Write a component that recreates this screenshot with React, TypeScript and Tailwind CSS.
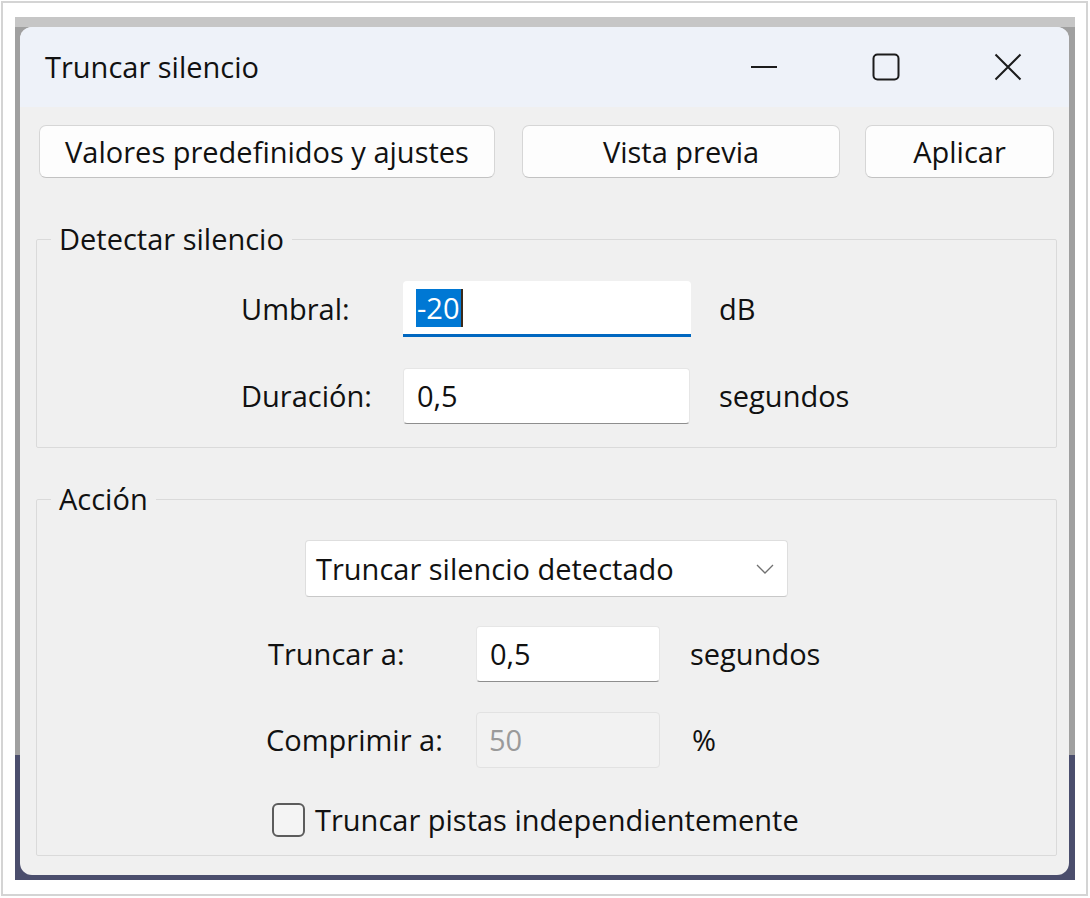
import React from 'react';

function CaptionButtons() {
  return (
    <div className="flex h-full">
      <div className="w-[122px] flex items-center justify-center">
        <svg width="28" height="4" viewBox="0 0 28 4">
          <line x1="1" y1="2" x2="27" y2="2" stroke="#1c1c1c" strokeWidth="2" />
        </svg>
      </div>
      <div className="w-[122px] flex items-center justify-center">
        <svg width="28" height="28" viewBox="0 0 28 28">
          <rect x="1.5" y="1.5" width="25" height="25" rx="4" fill="none" stroke="#1c1c1c" strokeWidth="2" />
        </svg>
      </div>
      <div className="w-[122px] flex items-center justify-center">
        <svg width="28" height="28" viewBox="0 0 28 28">
          <path d="M1.5 1.5 L26.5 26.5 M26.5 1.5 L1.5 26.5" stroke="#1c1c1c" strokeWidth="2" fill="none" />
        </svg>
      </div>
    </div>
  );
}

function PushButton({ label, width }: { label: string; width: string }) {
  return (
    <button
      className={`${width} h-[53px] bg-[#fdfdfd] border border-[#d6d6d6] border-b-[#c2c2c2] rounded-[7px] text-[29px] text-[#111] leading-none flex items-center justify-center`}
    >
      {label}
    </button>
  );
}

function TextBox({ value, width }: { value: string; width: string }) {
  return (
    <div
      className={`${width} h-[56px] bg-white border border-[#e6e6e6] border-b-[#8e8e8e] rounded-[4px] flex items-center pl-[13px] text-[29px] text-[#111]`}
    >
      {value}
    </div>
  );
}

function Group({ title, children }: { title: string; children: React.ReactNode }) {
  return (
    <fieldset className="ml-[16px] mr-[12px] border border-[#dadada] rounded-[2px]">
      <legend className="ml-[14px] px-[8px] text-[29px] leading-[38px] text-[#111]">{title}</legend>
      {children}
    </fieldset>
  );
}

export default function App() {
  return (
    <div className="w-[1090px] h-[898px] bg-white pt-[1px] pl-[1px] pr-[2px] pb-[2px] font-['Open_Sans',sans-serif]">
      <div className="h-full border-2 border-[#d4d4d4] pt-[14px] pl-[12px] pr-[11px] pb-[14px]">
        <div className="h-full pt-[10px] pl-[5px] pr-[6px] pb-[5px] bg-[linear-gradient(to_bottom,#c6c6c6_0px,#c6c6c6_10px,#a0a0a0_10px,#a0a0a0_738px,#4b4e6d_738px)]">
          <div className="h-full rounded-[12px] overflow-hidden bg-[#f0f0f0] flex flex-col">
            {/* title bar */}
            <div className="h-[80px] shrink-0 bg-[#eef2f9] flex items-center justify-between pl-[25px]">
              <span className="text-[29px] text-[#111]">Truncar silencio</span>
              <CaptionButtons />
            </div>

            {/* top buttons */}
            <div className="flex pt-[18px] pl-[19px] gap-[27px]">
              <PushButton label="Valores predefinidos y ajustes" width="w-[456px]" />
              <PushButton label="Vista previa" width="w-[318px]" />
              <div className="-ml-[2px]">
                <PushButton label="Aplicar" width="w-[189px]" />
              </div>
            </div>

            <div className="mt-[42px]">
              <Group title="Detectar silencio">
                <div className="grid grid-cols-[162px_288px_auto] items-center gap-y-[31px] pl-[204px] pt-[23px] pb-[23px] text-[29px] text-[#111]">
                  <span>Umbral:</span>
                  <div className="w-[288px] h-[56px] bg-white rounded-t-[4px] border-b-[3px] border-[#0067c0] flex items-center pl-[13px]">
                    <span className="bg-[#0078d4] text-white px-[1px] leading-[38px]">-20</span>
                    <span className="w-[2px] h-[38px] bg-[#3a2a1a]" />
                  </div>
                  <span className="pl-[28px]">dB</span>

                  <span>Duración:</span>
                  <TextBox value="0,5" width="w-[287px]" />
                  <span className="pl-[28px]">segundos</span>
                </div>
              </Group>
            </div>

            <div className="mt-[32px]">
              <Group title="Acción">
                <div className="pt-[22px] pb-[17px] text-[29px] text-[#111]">
                  <div className="flex justify-center">
                    <div className="w-[483px] h-[57px] bg-white border border-[#dedede] border-b-[#c8c8c8] rounded-[4px] flex items-center justify-between pl-[10px] pr-[12px]">
                      <span>Truncar silencio detectado</span>
                      <svg width="20" height="12" viewBox="0 0 20 12">
                        <path d="M2 2 L10 10 L18 2" stroke="#707070" strokeWidth="1.3" fill="none" />
                      </svg>
                    </div>
                  </div>

                  <div className="grid grid-cols-[210px_184px_auto] items-center gap-y-[30px] pl-[229px] mt-[29px]">
                    <span className="pl-[2px]">Truncar a:</span>
                    <TextBox value="0,5" width="w-[184px]" />
                    <span className="pl-[30px]">segundos</span>

                    <span>Comprimir a:</span>
                    <div className="w-[184px] h-[56px] bg-[#f2f2f2] border border-[#e2e2e2] rounded-[4px] flex items-center pl-[12px] text-[#9a9a9a]">
                      50
                    </div>
                    <span className="pl-[32px]">%</span>
                  </div>

                  <div className="flex items-center gap-[10px] pl-[235px] mt-[34px] h-[36px]">
                    <div className="w-[33px] h-[34px] border-2 border-[#5c5c5c] rounded-[6px] bg-[#f4f4f4]" />
                    <span>Truncar pistas independientemente</span>
                  </div>
                </div>
              </Group>
            </div>
          </div>
        </div>
      </div>
    </div>
  );
}
